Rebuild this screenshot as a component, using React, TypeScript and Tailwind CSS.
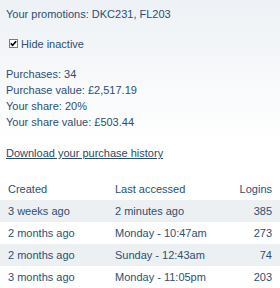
import React from "react";

const rows = [
  ["3 weeks ago", "2 minutes ago", "385"],
  ["2 months ago", "Monday - 10:47am", "273"],
  ["2 months ago", "Sunday - 12:43am", "74"],
  ["3 months ago", "Monday - 11:05pm", "203"],
];

export default function App() {
  return (
    <div
      className="w-[280px] h-[288px] overflow-hidden bg-[linear-gradient(#edf1f5,#ffffff_140px)] text-[11px] leading-[16px] text-[#2c4f72]"
      style={{ fontFamily: '"Liberation Sans", Arial, sans-serif' }}
    >
      <div className="pt-[6px] px-[6px]">
        <p>Your promotions: DKC231, FL203</p>
        <div className="mt-[14px] flex items-center h-[16px] pl-[3px]">
          <span className="w-[9px] h-[9px] border border-[#6e7f90] bg-white flex items-center justify-center mr-[3px] mt-[-1px]">
            <svg width="7" height="7" viewBox="0 0 7 7">
              <path d="M0.8 3.4 L2.6 5.3 L6.2 1.2" stroke="#000" strokeWidth="1.6" fill="none" />
            </svg>
          </span>
          <span>Hide inactive</span>
        </div>
        <div className="mt-[14px]">
          <p>Purchases: 34</p>
          <p>Purchase value: £2,517.19</p>
          <p>Your share: 20%</p>
          <p>Your share value: £503.44</p>
        </div>
        <p className="mt-[15px]">
          <a className="underline text-[#2a4a6c]">Download your purchase history</a>
        </p>
      </div>
      <div className="mt-[17px]">
        <div className="grid grid-cols-[107px_1fr_auto] h-[22px] items-center px-[8px]">
          <span>Created</span>
          <span>Last accessed</span>
          <span className="text-right">Logins</span>
        </div>
        {rows.map((r, i) => (
          <div
            key={i}
            className={`grid grid-cols-[107px_1fr_auto] h-[22px] items-center px-[8px] ${i % 2 === 0 ? "bg-[#edf0f3]" : ""}`}
          >
            <span>{r[0]}</span>
            <span>{r[1]}</span>
            <span className="text-right">{r[2]}</span>
          </div>
        ))}
      </div>
    </div>
  );
}
